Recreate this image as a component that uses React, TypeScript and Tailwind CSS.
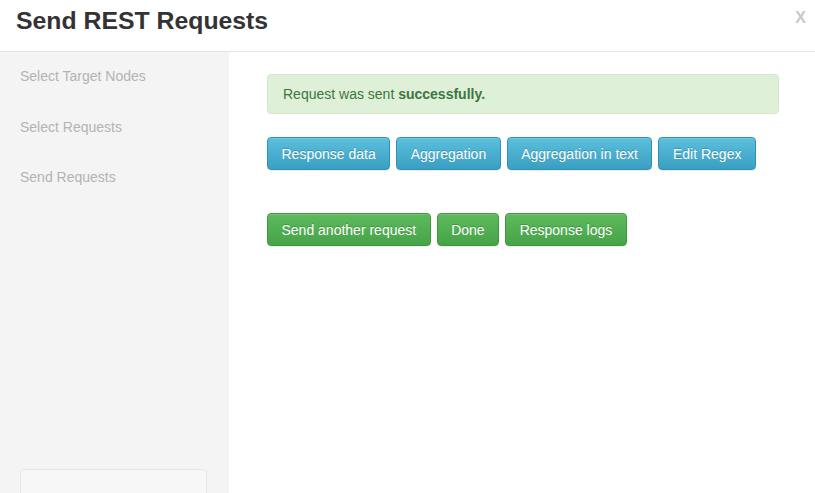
import React from "react";

const infoBtn =
  "h-[33px] px-[13.5px] flex items-center rounded-[4px] border border-[#2f92b4] bg-gradient-to-b from-[#5bbfdd] to-[#399fc2] text-white text-[14px] leading-5 [text-shadow:0_-1px_0_rgba(0,0,0,0.2)] shadow-[inset_0_1px_0_rgba(255,255,255,0.15),0_1px_1px_rgba(0,0,0,0.075)]";

const successBtn =
  "h-[33px] px-[13.5px] flex items-center rounded-[4px] border border-[#41973f] bg-gradient-to-b from-[#5dba5d] to-[#47a347] text-white text-[14px] leading-5 [text-shadow:0_-1px_0_rgba(0,0,0,0.2)] shadow-[inset_0_1px_0_rgba(255,255,255,0.15),0_1px_1px_rgba(0,0,0,0.075)]";

export default function App() {
  return (
    <div className="h-[493px] w-[815px] overflow-hidden bg-white flex flex-col font-['Liberation_Sans',Arial,sans-serif]">
      {/* header */}
      <div className="h-[52px] shrink-0 border-b border-[#e5e5e5] flex justify-between">
        <h1 className="pl-4 pt-[7px] text-[24.8px] leading-[28px] font-bold text-[#333]">
          Send REST Requests
        </h1>
        <button className="pr-[9px] pt-[9px] self-start text-[16px] leading-[18px] font-bold text-[#c8c8c8]">
          X
        </button>
      </div>

      <div className="flex flex-1 min-h-0">
        {/* steps */}
        <div className="w-[229px] shrink-0 bg-[#f4f4f4] flex flex-col overflow-hidden">
          <div className="pl-5 pt-[14px] flex flex-col gap-[30.5px] text-[14px] leading-5 text-[#b3b3b3]">
            <span>Select Target Nodes</span>
            <span>Select Requests</span>
            <span>Send Requests</span>
          </div>
          <div className="mt-auto -mb-[10px] ml-5 w-[187px] h-[34px] shrink-0 rounded-[4px] border border-[#e6e6e6] bg-[#f7f7f7]" />
        </div>

        {/* content */}
        <div className="flex-1 pl-[38px] pr-[36px] pt-[22px]">
          <div className="h-[40px] px-[15px] flex items-center rounded-[4px] border border-[#d3e8c6] bg-[#dff0d8] text-[14px] text-[#3c763d]">
            <span>
              Request was sent <b>successfully.</b>
            </span>
          </div>

          <div className="mt-[23px] flex gap-[6px]">
            <button className={infoBtn}>Response data</button>
            <button className={infoBtn}>Aggregation</button>
            <button className={infoBtn}>Aggregation in text</button>
            <button className={infoBtn}>Edit Regex</button>
          </div>

          <div className="mt-[43px] flex gap-[6px]">
            <button className={successBtn}>Send another request</button>
            <button className={successBtn}>Done</button>
            <button className={successBtn}>Response logs</button>
          </div>
        </div>
      </div>
    </div>
  );
}
